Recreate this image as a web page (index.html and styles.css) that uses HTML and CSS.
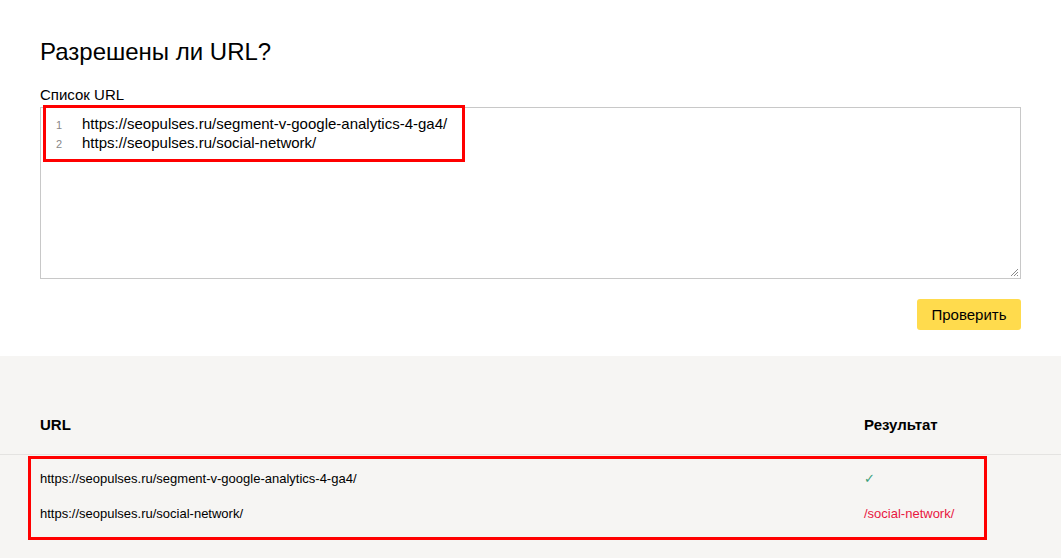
FILE: index.html
```html
<!DOCTYPE html>
<html lang="ru">
<head>
<meta charset="utf-8">
<title>Разрешены ли URL?</title>
<link rel="stylesheet" href="styles.css">
</head>
<body>
<section class="form">
  <h1 class="title">Разрешены ли URL?</h1>
  <div class="label">Список URL</div>
  <div class="editor">
    <div class="line"><span class="num">1</span><span class="code">https://seopulses.ru/segment-v-google-analytics-4-ga4/</span></div>
    <div class="line"><span class="num">2</span><span class="code">https://seopulses.ru/social-network/</span></div>
    <svg class="grip" width="9" height="9" viewBox="0 0 9 9"><path d="M1 8L8 1M4 8L8 4M7 8L8 7" stroke="#8a8a8a" stroke-width="1" fill="none"/></svg>
  </div>
  <div class="actions"><button class="btn">Проверить</button></div>
</section>
<section class="results">
  <div class="row head">
    <div>URL</div>
    <div>Результат</div>
  </div>
  <div class="rows">
    <div class="row">
      <div>https://seopulses.ru/segment-v-google-analytics-4-ga4/</div>
      <div class="ok">✓</div>
    </div>
    <div class="row">
      <div>https://seopulses.ru/social-network/</div>
      <div class="bad">/social-network/</div>
    </div>
  </div>
</section>
<div class="mark mark-input"></div>
<div class="mark mark-results"></div>
</body>
</html>
```
FILE: styles.css
```css
* { box-sizing: border-box; }
html, body { margin: 0; padding: 0; }
body {
  font-family: "Liberation Sans", Arial, sans-serif;
  color: #000;
  background: #f6f5f3;
  position: relative;
  min-height: 558px;
}
.form {
  background: #fff;
  padding: 38px 40px 26px;
}
.title {
  margin: 0;
  font-size: 24px;
  line-height: 28px;
  font-weight: normal;
}
.label {
  margin-top: 20px;
  font-size: 15px;
  line-height: 18px;
}
.editor {
  position: relative;
  margin-top: 3px;
  height: 172px;
  border: 1px solid #c8c8c8;
  padding-top: 6px;
}
.line {
  display: flex;
  align-items: baseline;
  height: 19px;
  line-height: 19px;
}
.num {
  width: 41px;
  padding-left: 15px;
  font-size: 11px;
  color: #888;
}
.code {
  font-size: 15px;
}
.grip {
  position: absolute;
  right: 1px;
  bottom: 1px;
}
.actions {
  display: flex;
  justify-content: flex-end;
  margin-top: 20px;
}
.btn {
  width: 104px;
  height: 31px;
  border: 0;
  border-radius: 3px;
  background: #ffdb4d;
  font-family: inherit;
  font-size: 15px;
  color: #000;
  padding: 0;
  cursor: pointer;
}
.results {
  padding-top: 60px;
}
.row {
  display: grid;
  grid-template-columns: 1fr 157px;
  padding: 10px 40px;
  font-size: 13px;
  line-height: 15px;
}
.row.head {
  padding: 0 40px 20px;
  font-size: 15px;
  line-height: 18px;
  font-weight: bold;
  border-bottom: 1px solid #e4e3e1;
}
.rows {
  padding-top: 6px;
}
.ok { color: #3aa07a; }
.bad { color: #e8173f; }
.mark {
  position: absolute;
  border: 3px solid #ff0000;
  pointer-events: none;
}
.mark-input {
  left: 43px;
  top: 105px;
  width: 422px;
  height: 57px;
}
.mark-results {
  left: 28px;
  top: 456px;
  width: 959px;
  height: 84px;
}
```
